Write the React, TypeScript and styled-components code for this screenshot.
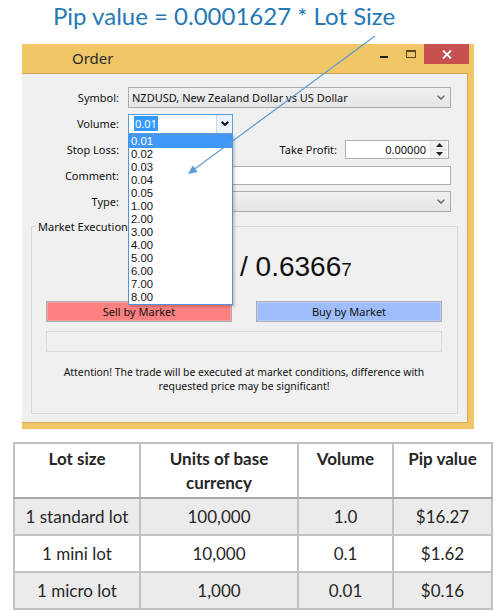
import React from 'react';
import styled, { createGlobalStyle } from 'styled-components';

const GlobalStyle = createGlobalStyle`
  html, body {
    margin: 0;
    padding: 0;
    background: #ffffff;
  }
  body {
    width: 496px;
    height: 611px;
    overflow: hidden;
  }
`;

const Page = styled.div`
  position: relative;
  width: 496px;
  height: 611px;
  font-family: 'Noto Sans', sans-serif;
`;

const Heading = styled.h1`
  margin: 0;
  height: 44px;
  padding-left: 53px;
  box-sizing: border-box;
  font-family: Lato, sans-serif;
  font-weight: 400;
  font-size: 24px;
  line-height: 31px;
  color: #2478b4;
  white-space: nowrap;
`;

// --- window chrome ---

const Window = styled.div`
  margin-left: 22px;
  width: 452px;
  height: 385px;
  background: #f0c667;
  display: flex;
  flex-direction: column;
`;

const TitleBar = styled.div`
  height: 29px;
  display: flex;
  align-items: flex-start;
  flex-shrink: 0;
`;

const Title = styled.div`
  flex: 1;
  padding-left: 50px;
  font-size: 15px;
  line-height: 29px;
  color: #2b2b2b;
`;

const Controls = styled.div`
  display: flex;
  align-items: flex-start;
  margin-right: 5px;
`;

const CtrlButton = styled.div<{ $close?: boolean }>`
  width: ${(p) => (p.$close ? '45px' : '27px')};
  height: 20px;
  display: flex;
  align-items: center;
  justify-content: center;
  background: ${(p) => (p.$close ? '#c75050' : 'transparent')};
`;

const MinIcon = styled.div`
  width: 8px;
  height: 2px;
  margin-top: 6px;
  background: #1e1e1e;
`;

const MaxIcon = styled.div`
  width: 8px;
  height: 5px;
  border: 1px solid #5a4a22;
  border-top-width: 2px;
  margin-top: -1px;
`;

const Body = styled.div`
  flex: 1;
  display: flex;
  padding: 0 6px 6px 0;
`;

const Content = styled.div`
  flex: 1;
  background: #f0f0f0;
  border-top: 1px solid #cfa553;
  border-right: 1px solid #d4ab5c;
  border-bottom: 1px solid #d4ab5c;
  display: flex;
  flex-direction: column;
  padding-top: 13px;
  font-size: 11px;
  color: #111;
`;

// --- form ---

const Row = styled.div`
  display: flex;
  align-items: center;
  height: 21px;
  margin-bottom: 5px;
`;

const Label = styled.div<{ $width?: number }>`
  width: ${(p) => p.$width ?? 97}px;
  text-align: right;
  margin-right: ${(p) => (p.$width ? 8 : 9)}px;
  white-space: nowrap;
`;

const SelectBox = styled.div<{ $width: number }>`
  width: ${(p) => p.$width}px;
  height: 21px;
  box-sizing: border-box;
  border: 1px solid #acacac;
  background: linear-gradient(#f0f0f0, #e5e5e5);
  display: flex;
  align-items: center;
  padding-left: 3px;
  padding-right: 5px;
`;

const SelectText = styled.span`
  flex: 1;
  white-space: nowrap;
`;

const TextInput = styled.div<{ $width: number }>`
  width: ${(p) => p.$width}px;
  height: 19px;
  box-sizing: border-box;
  border: 1px solid #abadb3;
  background: #ffffff;
  display: flex;
  align-items: center;
`;

const SpinValue = styled.span`
  flex: 1;
  text-align: right;
  padding-right: 4px;
`;

const Spinner = styled.div`
  width: 16px;
  height: 100%;
  display: flex;
  flex-direction: column;
  border-left: 1px solid #e0e0e0;
  margin-right: 1px;
`;

const SpinHalf = styled.div`
  flex: 1;
  display: flex;
  align-items: center;
  justify-content: center;
  background: #f2f2f2;
  & + & {
    border-top: 1px solid #d8d8d8;
  }
`;

const Combo = styled.div`
  position: relative;
  width: 105px;
  height: 20px;
  box-sizing: border-box;
  border: 1px solid #569de5;
  background: #ffffff;
  display: flex;
  align-items: center;
`;

const ComboText = styled.div`
  flex: 1;
  padding-left: 5px;
`;

const Selected = styled.span`
  background: #3399ff;
  color: #ffffff;
  padding: 0 1px;
`;

const ComboButton = styled.div`
  width: 15px;
  height: 100%;
  border-left: 1px solid #c5dcf3;
  background: #eaf3fc;
  display: flex;
  align-items: center;
  justify-content: center;
`;

const DropList = styled.div`
  position: absolute;
  top: 19px;
  left: -1px;
  width: 105px;
  box-sizing: border-box;
  border: 1px solid #4f94dc;
  background: #ffffff;
  box-shadow: 2px 2px 2px rgba(0, 0, 0, 0.18);
  z-index: 2;
`;

const DropItem = styled.div<{ $active?: boolean }>`
  height: 13px;
  line-height: 13px;
  padding-left: 2px;
  font-family: 'Liberation Sans', sans-serif;
  font-size: 11.3px;
  background: ${(p) => (p.$active ? '#3f97f7' : 'transparent')};
  color: ${(p) => (p.$active ? '#ffffff' : '#111')};
`;

const Spacer = styled.div`
  flex: 1;
`;

const Gap = styled.div<{ $w: number }>`
  width: ${(p) => p.$w}px;
`;

// --- market execution group ---

const Group = styled.fieldset`
  flex: 1;
  margin: 2px 9px 8px 9px;
  padding: 0 15px 0 14px;
  border: 1px solid #dadada;
  min-width: 0;
  display: flex;
  flex-direction: column;
`;

const Legend = styled.legend`
  margin-left: -10px;
  padding: 0 2px;
  line-height: 15px;
  font-size: 11px;
`;

// the bid half of the quote sits under the open volume list
const Price = styled.div`
  margin-top: 16px;
  padding-left: 194px;
  font-family: 'Liberation Sans', sans-serif;
  font-size: 28px;
  line-height: 34px;
  color: #111;
  white-space: nowrap;
`;

const SmallDigit = styled.span`
  font-size: 19px;
`;

const Buttons = styled.div`
  display: flex;
  gap: 24px;
  margin-top: 14px;
`;

const MarketButton = styled.div<{ $fill: string; $edge: string }>`
  flex: 1;
  height: 21px;
  box-sizing: border-box;
  border: 1px solid #adadad;
  box-shadow: inset 0 0 0 1px ${(p) => p.$edge};
  background: ${(p) => p.$fill};
  display: flex;
  align-items: center;
  justify-content: center;
  color: #111;
`;

const Progress = styled.div`
  height: 21px;
  margin-top: 9px;
  box-sizing: border-box;
  border: 1px solid #dadada;
`;

const Notice = styled.div`
  margin-top: 13px;
  text-align: center;
  font-size: 10.4px;
  line-height: 14px;
  color: #111;
`;

// --- lot table ---

const LotTable = styled.table`
  margin: 13px 0 0 13px;
  width: 478px;
  border-collapse: collapse;
  table-layout: fixed;
  font-family: Lato, sans-serif;
  font-size: 17px;
  color: #262626;
  border: 2px solid #c2c2c2;
`;

const HeadCell = styled.th`
  height: 55px;
  box-sizing: border-box;
  padding: 3px 4px 0;
  vertical-align: top;
  font-weight: 700;
  line-height: 24px;
  border: 2px solid #c2c2c2;
  border-bottom-color: #a8a8a8;
  background: #ffffff;
`;

const BodyRow = styled.tr<{ $shade?: boolean }>`
  background: ${(p) => (p.$shade ? '#ebebeb' : '#ffffff')};
`;

const Cell = styled.td`
  height: 37px;
  box-sizing: border-box;
  padding: 0 4px;
  text-align: center;
  border: 2px solid #c2c2c2;
`;

// --- overlay arrow ---

const Overlay = styled.svg`
  position: absolute;
  left: 0;
  top: 0;
  pointer-events: none;
  z-index: 5;
`;

const Chevron = ({ bold }: { bold?: boolean }) => (
  <svg width="8" height="5" viewBox="0 0 8 5">
    <path
      d="M0.7 0.7 L4 4 L7.3 0.7"
      fill="none"
      stroke={bold ? '#111' : '#6a6a6a'}
      strokeWidth={bold ? 2 : 1.5}
    />
  </svg>
);

const volumes = ['0.01', '0.02', '0.03', '0.04', '0.05', '1.00', '2.00', '3.00', '4.00', '5.00', '6.00', '7.00', '8.00'];

const lots = [
  { name: '1 standard lot', units: '100,000', volume: '1.0', pip: '$16.27' },
  { name: '1 mini lot', units: '10,000', volume: '0.1', pip: '$1.62' },
  { name: '1 micro lot', units: '1,000', volume: '0.01', pip: '$0.16' },
];

export default function App() {
  return (
    <Page>
      <GlobalStyle />
      <Heading>Pip value = 0.0001627 * Lot Size</Heading>

      <Window>
        <TitleBar>
          <Title>Order</Title>
          <Controls>
            <CtrlButton>
              <MinIcon />
            </CtrlButton>
            <CtrlButton>
              <MaxIcon />
            </CtrlButton>
            <CtrlButton $close>
              <svg width="10" height="9" viewBox="0 0 10 9">
                <path d="M1 0.5 L9 8.5 M9 0.5 L1 8.5" stroke="#fff" strokeWidth="1.8" />
              </svg>
            </CtrlButton>
          </Controls>
        </TitleBar>

        <Body>
          <Content>
            <Row>
              <Label>Symbol:</Label>
              <SelectBox $width={323}>
                <SelectText>NZDUSD, New Zealand Dollar vs US Dollar</SelectText>
                <Chevron />
              </SelectBox>
            </Row>
            <Row>
              <Label>Volume:</Label>
              <Combo>
                <ComboText>
                  <Selected>0.01</Selected>
                </ComboText>
                <ComboButton>
                  <Chevron bold />
                </ComboButton>
                <DropList>
                  {volumes.map((v, i) => (
                    <DropItem key={v} $active={i === 0}>
                      {v}
                    </DropItem>
                  ))}
                </DropList>
              </Combo>
            </Row>
            <Row>
              <Label>Stop Loss:</Label>
              <TextInput $width={104} />
              <Spacer />
              <Label $width={100}>Take Profit:</Label>
              <TextInput $width={104}>
                <SpinValue>0.00000</SpinValue>
                <Spinner>
                  <SpinHalf>
                    <svg width="7" height="4" viewBox="0 0 7 4">
                      <path d="M0 4 L3.5 0 L7 4 Z" fill="#222" />
                    </svg>
                  </SpinHalf>
                  <SpinHalf>
                    <svg width="7" height="4" viewBox="0 0 7 4">
                      <path d="M0 0 L3.5 4 L7 0 Z" fill="#222" />
                    </svg>
                  </SpinHalf>
                </Spinner>
              </TextInput>
              <Gap $w={18} />
            </Row>
            <Row>
              <Label>Comment:</Label>
              <TextInput $width={323} />
            </Row>
            <Row>
              <Label>Type:</Label>
              <SelectBox $width={323}>
                <SelectText />
                <Chevron />
              </SelectBox>
            </Row>

            <Group>
              <Legend>Market Execution</Legend>
              <Price>
                / 0.6366<SmallDigit>7</SmallDigit>
              </Price>
              <Buttons>
                <MarketButton $fill="#ff8080" $edge="#ff9c9c">Sell by Market</MarketButton>
                <MarketButton $fill="#9fbdfd" $edge="#b6cdfd">Buy by Market</MarketButton>
              </Buttons>
              <Progress />
              <Notice>
                Attention! The trade will be executed at market conditions, difference with
                <br />
                requested price may be significant!
              </Notice>
            </Group>
          </Content>
        </Body>
      </Window>

      <LotTable>
        <colgroup>
          <col style={{ width: 126 }} />
          <col style={{ width: 158 }} />
          <col style={{ width: 95 }} />
          <col style={{ width: 99 }} />
        </colgroup>
        <thead>
          <tr>
            <HeadCell>Lot size</HeadCell>
            <HeadCell>Units of base currency</HeadCell>
            <HeadCell>Volume</HeadCell>
            <HeadCell>Pip value</HeadCell>
          </tr>
        </thead>
        <tbody>
          {lots.map((l, i) => (
            <BodyRow key={l.name} $shade={i !== 1}>
              <Cell>{l.name}</Cell>
              <Cell>{l.units}</Cell>
              <Cell>{l.volume}</Cell>
              <Cell>{l.pip}</Cell>
            </BodyRow>
          ))}
        </tbody>
      </LotTable>

      <Overlay width="496" height="611" viewBox="0 0 496 611">
        <line x1="375" y1="36" x2="194" y2="169.5" stroke="#5b9bd5" strokeWidth="1.2" />
        <path d="M188 174 L197.6 171.9 L192.8 165.5 Z" fill="#5b9bd5" />
      </Overlay>
    </Page>
  );
}
